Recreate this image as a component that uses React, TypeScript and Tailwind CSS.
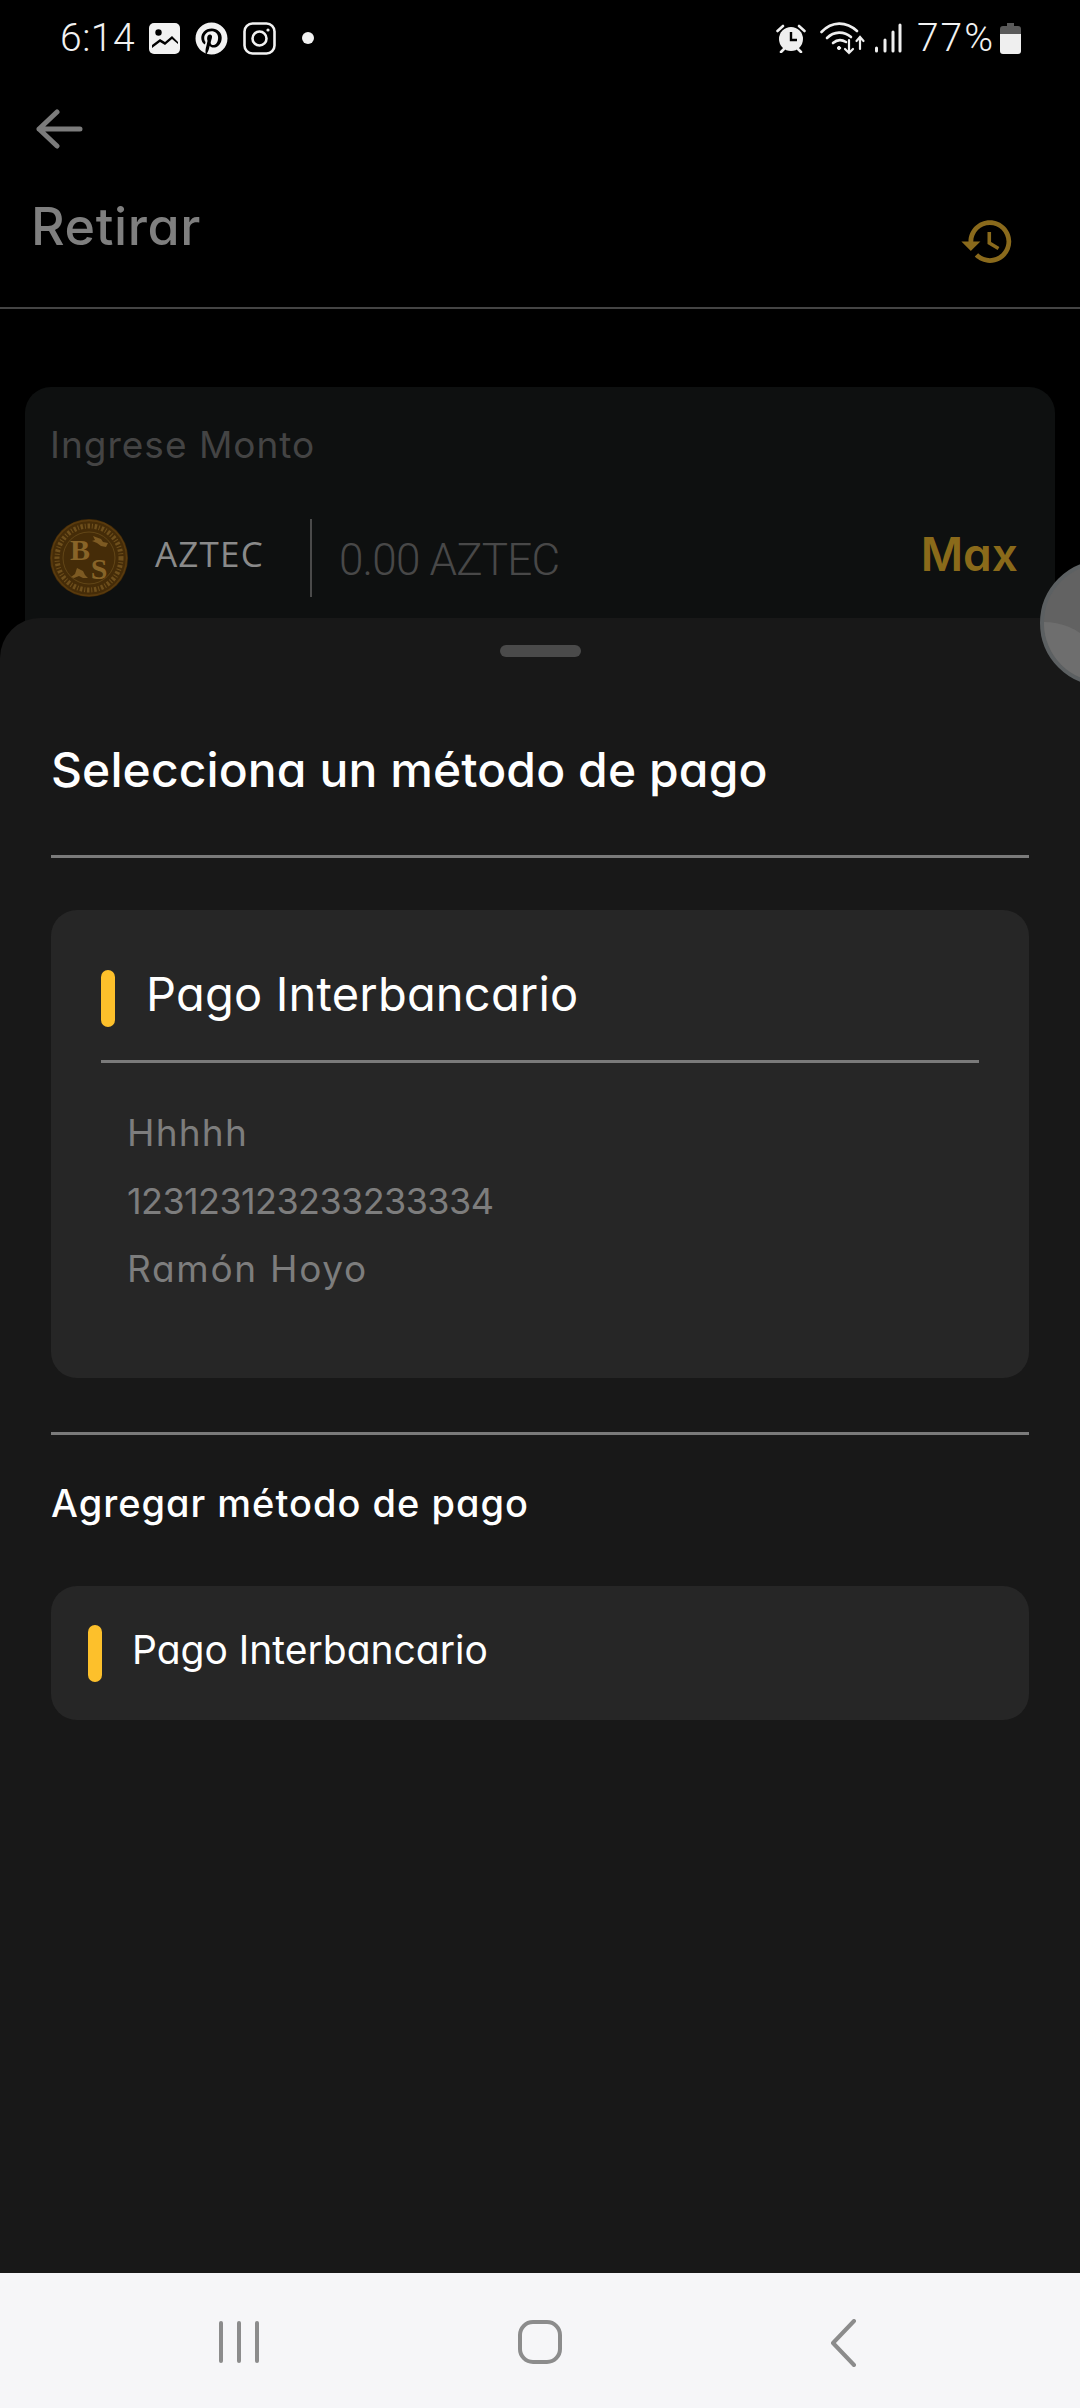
import { FaPinterest } from "react-icons/fa";

const pop = "font-['Inter','Liberation_Sans',sans-serif] [font-feature-settings:'cv11']";

function Coin() {
  return (
    <svg width="78" height="78" viewBox="0 0 78 78" className="shrink-0">
      <circle cx="39" cy="39" r="39" fill="#452c08" />
      <circle cx="39" cy="39" r="37.5" fill="none" stroke="#5a3b0e" strokeWidth="1.5" />
      <circle cx="39" cy="39" r="32" fill="none" stroke="#6e4f1c" strokeWidth="5" strokeDasharray="2.5 1.8 1 1.8" />
      <circle cx="39" cy="39" r="26" fill="none" stroke="#6a4c1a" strokeWidth="0.8" />
      <text x="30" y="41" fontSize="30" fontWeight="700" fontFamily="'Liberation Serif',serif" fill="#886428" textAnchor="middle">B</text>
      <text x="49" y="60" fontSize="30" fontWeight="700" fontFamily="'Liberation Serif',serif" fill="#886428" textAnchor="middle">S</text>
      <path d="M43 17l8 3 2 3 5 1-2 4-5-1-4-3-5-2 3-1zM27 49l6 3 2 4 3 3-5 0-4-2-5 2-3-1 4-3z" fill="#7d5a22" />
    </svg>
  );
}

function Alarm() {
  return (
    <svg width="30" height="29" viewBox="0 0 30 29">
      <circle cx="15" cy="15" r="12" fill="#efefef" />
      <path d="M15 8v8h6" fill="none" stroke="#000" strokeWidth="2.4" />
      <path d="M1.5 7L7 2M28.5 7L23 2M5 28l3-3M25 28l-3-3" stroke="#efefef" strokeWidth="2.6" strokeLinecap="round" />
    </svg>
  );
}

function Wifi() {
  return (
    <svg width="46" height="33" viewBox="0 0 46 33" fill="none" stroke="#efefef" strokeWidth="2.6" strokeLinecap="round">
      <path d="M1.5 10C12 -1 26 -1 37 9" />
      <path d="M7 16c7-7 17-7 24-1" />
      <path d="M13 21c4-3.5 9-3.5 13-1" />
      <circle cx="19" cy="26" r="1.6" fill="#efefef" strokeWidth="1" />
      <path d="M29 18v13M25 27l4 4 4-4" strokeWidth="2.2" />
      <path d="M40 27V15M36.5 19l3.5-4 3.5 4" strokeWidth="2.2" />
    </svg>
  );
}

function Signal() {
  return (
    <svg width="28" height="30" viewBox="0 0 28 30" stroke="#efefef" strokeWidth="3" strokeLinecap="round">
      <path d="M2.5 28v-3M11 28V17M19 28V9M26 28V2" />
    </svg>
  );
}

function Battery() {
  return (
    <svg width="21" height="31" viewBox="0 0 21 31">
      <path d="M7 0h7v3h4a3 3 0 0 1 3 3v5H0V6a3 3 0 0 1 3-3h4z" fill="#5a5a5a" />
      <path d="M0 11h21v17a3 3 0 0 1-3 3H3a3 3 0 0 1-3-3z" fill="#efefef" />
    </svg>
  );
}

function PictureIcon() {
  return (
    <svg width="31" height="31" viewBox="0 0 31 31">
      <rect width="31" height="31" rx="5" fill="#f2f2f2" />
      <circle cx="9.5" cy="9.5" r="3.2" fill="#000" />
      <path d="M3 22l8-6 5 3 7-6 6 6v2l-6-5-7 6-5-3-8 6z" fill="#000" />
    </svg>
  );
}

function InstaIcon() {
  return (
    <svg width="33" height="33" viewBox="0 0 33 33" fill="none" stroke="#f2f2f2" strokeWidth="2.6">
      <rect x="1.5" y="1.5" width="30" height="30" rx="8" />
      <circle cx="16.5" cy="16.5" r="7" />
      <circle cx="25" cy="8" r="1.6" fill="#f2f2f2" stroke="none" />
    </svg>
  );
}

export default function App() {
  return (
    <div className="relative h-[2408px] w-[1080px] overflow-hidden bg-black">
      <div className="flex h-[76px] items-center justify-between pl-[60px] pr-[59px]">
        <div className="flex items-center">
          <span className="w-[74px] font-['Roboto',sans-serif] text-[39px] font-light tracking-[0.5px] text-[#f2f2f2]">6:14</span>
          <span className="ml-[15px] flex items-center gap-[15px]">
            <PictureIcon />
            <FaPinterest className="text-[33px] text-[#f2f2f2]" />
            <InstaIcon />
          </span>
          <span className="ml-[26px] h-[12px] w-[12px] rounded-full bg-[#f2f2f2]" />
        </div>
        <div className="flex items-center">
          <Alarm />
          <span className="ml-[14px]"><Wifi /></span>
          <span className="ml-[8px]"><Signal /></span>
          <span className="ml-[15px] font-['Roboto',sans-serif] text-[39px] font-light tracking-[2px] text-[#f2f2f2]">77%</span>
          <span className="ml-[5px]"><Battery /></span>
        </div>
      </div>

      <div className="h-[233px] border-b-2 border-[#444444]">
        <div className="flex h-[73px] items-end pl-[36px]">
          <svg width="47" height="40" viewBox="0 0 47 40" fill="none" stroke="#7c7c7c" strokeWidth="5" strokeLinecap="round" strokeLinejoin="round">
            <path d="M44 20H3M21 3L3 20l18 17" />
          </svg>
        </div>
        <div className="flex items-start justify-between pr-[64px]">
          <h1 className={`${pop} ml-[31px] mt-[48px] text-[52px] font-medium leading-[60px] tracking-[0.6px] text-[#7f7f7f]`}>Retirar</h1>
          <svg width="57" height="57" viewBox="0 0 24 24" fill="#8a6a1c" className="mt-[64px]">
            <path d="M13 3c-4.97 0-9 4.03-9 9H1l3.89 3.89.07.14L9 12H6c0-3.87 3.13-7 7-7s7 3.13 7 7-3.13 7-7 7c-1.93 0-3.68-.79-4.94-2.06l-1.42 1.42C8.27 19.99 10.51 21 13 21c4.97 0 9-4.03 9-9s-4.03-9-9-9zm-1 5v5l4.28 2.54.72-1.21-3.5-2.08V8H12z" />
          </svg>
        </div>
      </div>

      <div className="mx-[25px] mt-[78px] h-[300px] rounded-[26px] bg-[#0e1010] px-[25px]">
        <p className={`${pop} pt-[36px] text-[37px] leading-[44px] tracking-[1px] text-[#444444]`}>Ingrese Monto</p>
        <div className="mt-[52px] flex h-[78px] items-center">
          <Coin />
          <span className="-mt-[7px] ml-[27px] w-[155px] font-['Open_Sans',sans-serif] text-[35px] tracking-[1.2px] text-[#8a8a8a]">AZTEC</span>
          <span className="h-[78px] w-[2px] bg-[#4a4a4a]" />
          <span className="ml-[27px] mt-[3px] font-['Roboto',sans-serif] text-[44px] font-light tracking-[-0.8px] text-[#484848]">0.00 AZTEC</span>
          <span className={`${pop} -mt-[7px] ml-auto mr-[12px] text-[46px] font-semibold text-[#8a6a1a]`}>Max</span>
        </div>
      </div>

      <div className="absolute left-[1040px] top-[560px] z-10 h-[126px] w-[126px] overflow-hidden rounded-full border-[4px] border-[#5c6062] bg-[#626262]">
        <div className="absolute -left-[64px] top-[58px] h-[128px] w-[128px] rounded-full bg-[#6e6e6e]" />
      </div>

      <div className="absolute inset-x-0 top-[618px] h-[1655px] rounded-t-[40px] bg-[#181818]">
        <div className="mx-auto mt-[27px] h-[12px] w-[81px] rounded-full bg-[#4a4a4a]" />
        <div className="px-[51px]">
          <h2 className={`${pop} mt-[83px] text-[48px] font-medium leading-[60px] tracking-[0.1px] text-white`}>Selecciona un método de pago</h2>
          <div className="mt-[55px] h-[3px] bg-[#7a7a7a]" />
          <div className="mt-[52px] h-[468px] rounded-[26px] bg-[#262626] px-[50px] pt-[60px]">
            <div className="flex items-start">
              <span className="h-[57px] w-[14px] rounded-full bg-[#fdc02b]" />
              <span className={`${pop} ml-[31px] -mt-[6px] text-[47px] leading-[60px] tracking-[0.2px] text-white`}>Pago Interbancario</span>
            </div>
            <div className="mt-[33px] h-[3px] bg-[#7a7a7a]" />
            <div className={`${pop} mt-[36px] pl-[26px] text-[37px] leading-[68px] text-[#7d7d7d]`}>
              <p className="tracking-[1.2px]">Hhhhh</p>
              <p className="text-[36px] tracking-[-0.6px]">123123123233233334</p>
              <p className="tracking-[1.7px]">Ramón Hoyo</p>
            </div>
          </div>
          <div className="mt-[54px] h-[3px] bg-[#7a7a7a]" />
          <p className={`${pop} mt-[38px] text-[38px] font-medium leading-[60px] tracking-[1px] text-white`}>Agregar método de pago</p>
          <div className="mt-[53px] flex h-[134px] items-center rounded-[26px] bg-[#262626] pl-[37px]">
            <span className="h-[57px] w-[14px] rounded-full bg-[#fdc02b]" />
            <span className={`${pop} ml-[30px] -mt-[6px] text-[39px] text-white`}>Pago Interbancario</span>
          </div>
        </div>
      </div>

      <div className="absolute inset-x-0 top-[2273px] flex h-[135px] items-start bg-[#f6f6f8] pt-[48px]">
        <div className="ml-[217px] flex h-[44px] w-[44px] justify-between px-[2px]">
          <span className="h-[42px] w-[4px] rounded-full bg-[#8c8c8c]" />
          <span className="h-[42px] w-[4px] rounded-full bg-[#8c8c8c]" />
          <span className="h-[42px] w-[4px] rounded-full bg-[#8c8c8c]" />
        </div>
        <span className="-mt-[1px] ml-[257px] h-[44px] w-[44px] rounded-[15px] border-[4px] border-[#8c8c8c]" />
        <svg width="30" height="48" viewBox="0 0 30 48" fill="none" stroke="#8c8c8c" strokeWidth="4" strokeLinecap="round" strokeLinejoin="round" className="ml-[266px] -mt-[2px]">
          <path d="M26 2L5 24L26 46" />
        </svg>
      </div>
    </div>
  );
}
